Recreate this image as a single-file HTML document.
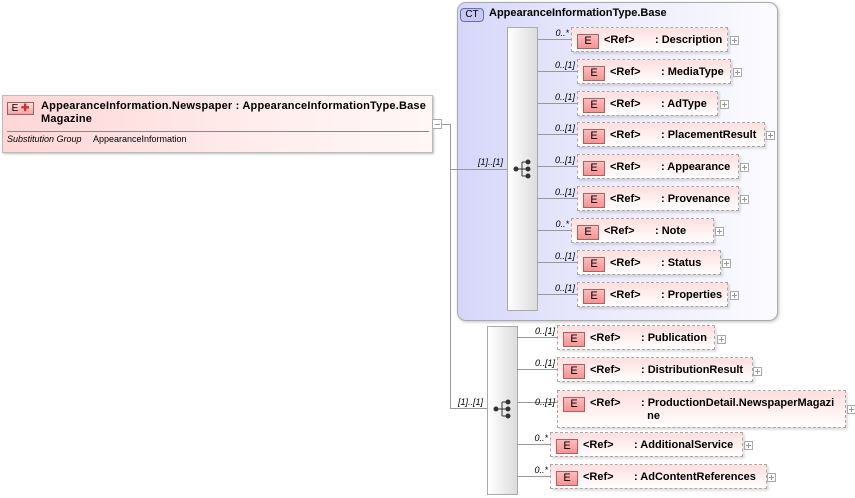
<!DOCTYPE html>
<html><head><meta charset="utf-8"><style>
*{margin:0;padding:0;box-sizing:border-box}
body{width:855px;height:498px;background:#fff;position:relative;overflow:hidden;font-family:"Liberation Sans",Arial,sans-serif;color:#000}
.a{position:absolute}
.el{position:absolute;height:25px;border:1px dashed #a8a8a8;background:linear-gradient(to bottom,#ffdede,#fff5f5 70%,#fff);box-shadow:2px 2px 2px rgba(0,0,0,.12)}
.eb{position:absolute;left:5px;top:6px;width:22px;height:15px;border:1px solid #b06060;background:linear-gradient(#fbb,#f29494);font-size:11px;text-align:center;line-height:13px;color:#000}
.ref{position:absolute;left:32px;top:6px;font-size:11px;font-weight:bold}
.nm{position:absolute;left:83px;top:6px;font-size:11px;font-weight:bold;white-space:nowrap}
.pl{position:absolute;width:9px;height:9px;border:1px solid #aaa;background:#fff}
.pl:before{content:"";position:absolute;left:1px;top:3px;width:5px;height:1px;background:#999}
.pl:after{content:"";position:absolute;left:3px;top:1px;width:1px;height:5px;background:#999}
.h{position:absolute;height:1px;background:#999}
.v{position:absolute;width:1px;background:#999}
.m{position:absolute;font-size:9px;font-style:italic;text-align:right;width:40px}
.bar{position:absolute;width:31px;border:1px solid #aaa;background:linear-gradient(to right,#fff,#dcdcdc)}
</style></head><body>

<div class="a" style="left:2px;top:95px;width:431px;height:58px;border:1px solid #bbb;background:linear-gradient(to right,#ffd6d6,#fff0f0 70%,#fff6f6);box-shadow:1px 1px 2px rgba(0,0,0,.25)">
  <div class="a" style="left:4px;top:6px;width:27px;height:13px;border:1px solid #a06060;background:linear-gradient(#fdd,#f4a4a4);font-size:10px;line-height:11px;text-align:center">E <b style="color:#c33">✚</b></div>
  <div class="a" style="left:38px;top:4px;font-size:11px;font-weight:bold;line-height:13px;letter-spacing:0.2px">AppearanceInformation.Newspaper : AppearanceInformationType.Base<br>Magazine</div>
  <div class="a" style="left:4px;top:35px;width:422px;height:1px;background:#888"></div>
  <div class="a" style="left:4px;top:38px;font-size:9px;font-style:italic">Substitution Group</div>
  <div class="a" style="left:90px;top:38px;font-size:9px">AppearanceInformation</div>
</div>
<div class="a" style="left:432px;top:119px;width:10px;height:10px;border:1px solid #aaa;background:#fff"><div class="a" style="left:2px;top:4px;width:5px;height:1px;background:#999"></div></div>
<div class="h" style="left:442px;top:124px;width:9px"></div>
<div class="v" style="left:450px;top:124px;height:285px"></div>
<div class="h" style="left:450px;top:169px;width:57px"></div>
<div class="h" style="left:450px;top:408px;width:37px"></div>

<div class="a" style="left:457px;top:2px;width:321px;height:319px;border:1px solid #aaa;border-radius:9px;background:linear-gradient(to right,#d6d6fa,#ececfc 50%,#fbfbff);box-shadow:1px 1px 3px rgba(0,0,0,.25)"></div>
<div class="a" style="left:460px;top:8px;width:24px;height:14px;border:1px solid #6a6ab0;border-radius:4px;background:#c8c8f4;font-size:10px;line-height:12px;text-align:center">CT</div>
<div class="a" style="left:489px;top:7px;font-size:11px;font-weight:bold">AppearanceInformationType.Base</div>
<div class="h" style="left:457px;top:169px;width:50px"></div>
<div class="m" style="left:463px;top:157px">[1]..[1]</div>
<div class="bar" style="left:507px;top:27px;height:284px"></div>
<div class="bar" style="left:487px;top:326px;height:169px"></div>

<svg class="a" style="left:512px;top:159px" width="22" height="20"><g fill="#333" stroke="#333"><circle cx="4" cy="10" r="2"/><line x1="4" y1="10" x2="10" y2="10"/><line x1="10" y1="3" x2="10" y2="17"/><line x1="10" y1="3" x2="16" y2="3"/><line x1="10" y1="10" x2="16" y2="10"/><line x1="10" y1="17" x2="16" y2="17"/><circle cx="16" cy="3" r="2"/><circle cx="16" cy="10" r="2"/><circle cx="16" cy="17" r="2"/></g></svg>
<svg class="a" style="left:492px;top:399px" width="22" height="20"><g fill="#333" stroke="#333"><circle cx="4" cy="10" r="2"/><line x1="4" y1="10" x2="10" y2="10"/><line x1="10" y1="3" x2="10" y2="17"/><line x1="10" y1="3" x2="16" y2="3"/><line x1="10" y1="10" x2="16" y2="10"/><line x1="10" y1="17" x2="16" y2="17"/><circle cx="16" cy="3" r="2"/><circle cx="16" cy="10" r="2"/><circle cx="16" cy="17" r="2"/></g></svg>
<div class="m" style="left:443px;top:397px">[1]..[1]</div>

<div class="h" style="left:537px;top:39px;width:34px"></div><div class="m" style="left:529px;top:28px">0..*</div>
<div class="el" style="left:571px;top:27px;width:157px"><div class="eb">E</div><div class="ref">&lt;Ref&gt;</div><div class="nm">: Description</div></div><div class="pl" style="left:730px;top:36px"></div>

<div class="h" style="left:537px;top:71px;width:40px"></div><div class="m" style="left:535px;top:60px">0..[1]</div>
<div class="el" style="left:577px;top:59px;width:154px"><div class="eb">E</div><div class="ref">&lt;Ref&gt;</div><div class="nm">: MediaType</div></div><div class="pl" style="left:733px;top:68px"></div>

<div class="h" style="left:537px;top:103px;width:40px"></div><div class="m" style="left:535px;top:92px">0..[1]</div>
<div class="el" style="left:577px;top:91px;width:141px"><div class="eb">E</div><div class="ref">&lt;Ref&gt;</div><div class="nm">: AdType</div></div><div class="pl" style="left:720px;top:100px"></div>

<div class="h" style="left:537px;top:134px;width:40px"></div><div class="m" style="left:535px;top:123px">0..[1]</div>
<div class="el" style="left:577px;top:122px;width:188px"><div class="eb">E</div><div class="ref">&lt;Ref&gt;</div><div class="nm">: PlacementResult</div></div><div class="pl" style="left:766px;top:131px"></div>

<div class="h" style="left:537px;top:166px;width:40px"></div><div class="m" style="left:535px;top:155px">0..[1]</div>
<div class="el" style="left:577px;top:154px;width:162px"><div class="eb">E</div><div class="ref">&lt;Ref&gt;</div><div class="nm">: Appearance</div></div><div class="pl" style="left:740px;top:163px"></div>

<div class="h" style="left:537px;top:198px;width:40px"></div><div class="m" style="left:535px;top:187px">0..[1]</div>
<div class="el" style="left:577px;top:186px;width:162px"><div class="eb">E</div><div class="ref">&lt;Ref&gt;</div><div class="nm">: Provenance</div></div><div class="pl" style="left:740px;top:195px"></div>

<div class="h" style="left:537px;top:230px;width:34px"></div><div class="m" style="left:529px;top:219px">0..*</div>
<div class="el" style="left:571px;top:218px;width:143px"><div class="eb">E</div><div class="ref">&lt;Ref&gt;</div><div class="nm">: Note</div></div><div class="pl" style="left:715px;top:227px"></div>

<div class="h" style="left:537px;top:262px;width:40px"></div><div class="m" style="left:535px;top:251px">0..[1]</div>
<div class="el" style="left:577px;top:250px;width:144px"><div class="eb">E</div><div class="ref">&lt;Ref&gt;</div><div class="nm">: Status</div></div><div class="pl" style="left:722px;top:259px"></div>

<div class="h" style="left:537px;top:294px;width:40px"></div><div class="m" style="left:535px;top:283px">0..[1]</div>
<div class="el" style="left:577px;top:282px;width:151px"><div class="eb">E</div><div class="ref">&lt;Ref&gt;</div><div class="nm">: Properties</div></div><div class="pl" style="left:730px;top:291px"></div>

<div class="h" style="left:517px;top:337px;width:40px"></div><div class="m" style="left:515px;top:326px">0..[1]</div>
<div class="el" style="left:557px;top:325px;width:158px"><div class="eb">E</div><div class="ref">&lt;Ref&gt;</div><div class="nm">: Publication</div></div><div class="pl" style="left:717px;top:335px"></div>

<div class="h" style="left:517px;top:369px;width:40px"></div><div class="m" style="left:515px;top:358px">0..[1]</div>
<div class="el" style="left:557px;top:357px;width:196px"><div class="eb">E</div><div class="ref">&lt;Ref&gt;</div><div class="nm">: DistributionResult</div></div><div class="pl" style="left:753px;top:367px"></div>

<div class="h" style="left:517px;top:402px;width:40px"></div><div class="m" style="left:515px;top:397px">0..[1]</div>
<div class="el" style="left:557px;top:390px;width:289px;height:38px"><div class="eb">E</div><div class="ref">&lt;Ref&gt;</div><div class="nm" style="line-height:13px">: ProductionDetail.NewspaperMagazi<br>&nbsp;&nbsp;ne</div></div><div class="pl" style="left:847px;top:405px"></div>

<div class="h" style="left:517px;top:444px;width:33px"></div><div class="m" style="left:508px;top:433px">0..*</div>
<div class="el" style="left:550px;top:432px;width:193px"><div class="eb">E</div><div class="ref">&lt;Ref&gt;</div><div class="nm">: AdditionalService</div></div><div class="pl" style="left:744px;top:441px"></div>

<div class="h" style="left:517px;top:476px;width:33px"></div><div class="m" style="left:508px;top:465px">0..*</div>
<div class="el" style="left:550px;top:464px;width:217px"><div class="eb">E</div><div class="ref">&lt;Ref&gt;</div><div class="nm">: AdContentReferences</div></div><div class="pl" style="left:767px;top:473px"></div>

</body></html>
